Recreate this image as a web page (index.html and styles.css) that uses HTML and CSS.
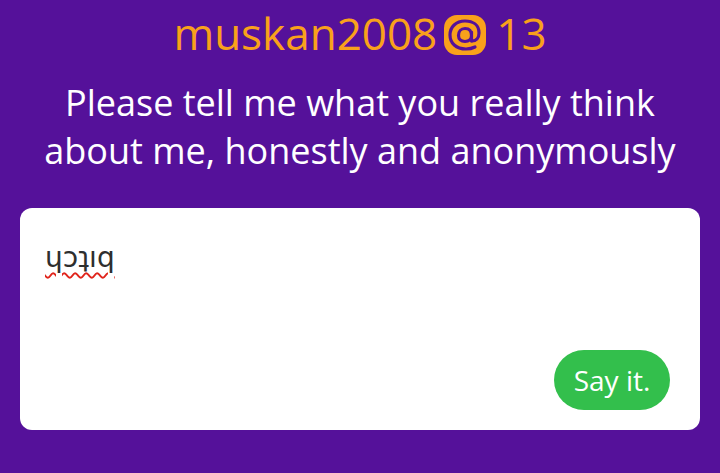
FILE: index.html
```html
<!DOCTYPE html>
<html lang="en">
<head>
<meta charset="utf-8">
<title>muskan2008 @ 13</title>
<link rel="stylesheet" href="styles.css">
</head>
<body>
<main class="page">
  <h1 class="title">
    <span>muskan2008</span>
    <svg class="logo" viewBox="0 0 42 40" aria-hidden="true">
      <rect x="0" y="0" width="42" height="40" rx="13" fill="#f9a11b"/>
      <path d="M28 26 C32 26 35 23 35 18 C35 10 29 6 21 6 C12 6 6 12 6 20 C6 28 12 34 22 34 C26 34 29 33 31 32" fill="none" stroke="#55119a" stroke-width="3.2" stroke-linecap="round"/>
      <path d="M27.5 26 L27.5 17 M27.5 20.5 C27.5 16 25 13.5 21 13.5 C17 13.5 14.5 16.5 14.5 20.5 C14.5 24 17 26.5 21 26.5 C25 26.5 27.5 24 27.5 20.5" fill="none" stroke="#55119a" stroke-width="3.2" stroke-linecap="round"/>
    </svg>
    <span class="age">13</span>
  </h1>
  <p class="prompt">Please tell me what you really think about me, honestly and anonymously</p>
  <form class="card">
    <textarea class="message" spellcheck="true">ɥɔʇıq</textarea>
    <div class="actions">
      <button type="button" class="send">Say it.</button>
    </div>
  </form>
</main>
</body>
</html>
```
FILE: styles.css
```css
html, body {
  margin: 0;
  height: 100%;
  background: #55119a;
}

body {
  font-family: "Open Sans", "Noto Sans", sans-serif;
  overflow: hidden;
}

.page {
  display: flex;
  flex-direction: column;
  align-items: center;
  padding: 0 20px;
}

.title {
  margin: 7px 0 0;
  display: flex;
  align-items: center;
  gap: 7px;
  font-size: 44px;
  font-weight: 400;
  line-height: 52px;
  color: #f9a11b;
}

.logo {
  width: 42px;
  height: 40px;
  margin-top: 3px;
}

.age {
  margin-left: 3px;
}

.prompt {
  margin: 20px 0 0;
  max-width: 640px;
  text-align: center;
  font-size: 36px;
  line-height: 48px;
  color: #ffffff;
}

.card {
  align-self: stretch;
  height: 222px;
  box-sizing: border-box;
  margin-top: 33px;
  background: #ffffff;
  border-radius: 12px;
  padding: 32px 30px 20px 25px;
  display: flex;
  flex-direction: column;
}

.message {
  flex: 1;
  border: none;
  outline: none;
  resize: none;
  padding: 0;
  font-family: "DejaVu Sans", "Open Sans", sans-serif;
  font-size: 28px;
  line-height: 36px;
  color: #2e2e2e;
  text-decoration: underline wavy #e0241b;
  text-decoration-thickness: 1.5px;
  text-underline-offset: 5px;
}

.actions {
  display: flex;
  justify-content: flex-end;
}

.send {
  width: 116px;
  height: 60px;
  padding: 0;
  border: none;
  border-radius: 30px;
  background: #33bf4c;
  color: #ffffff;
  font-family: inherit;
  font-size: 28px;
}
```
